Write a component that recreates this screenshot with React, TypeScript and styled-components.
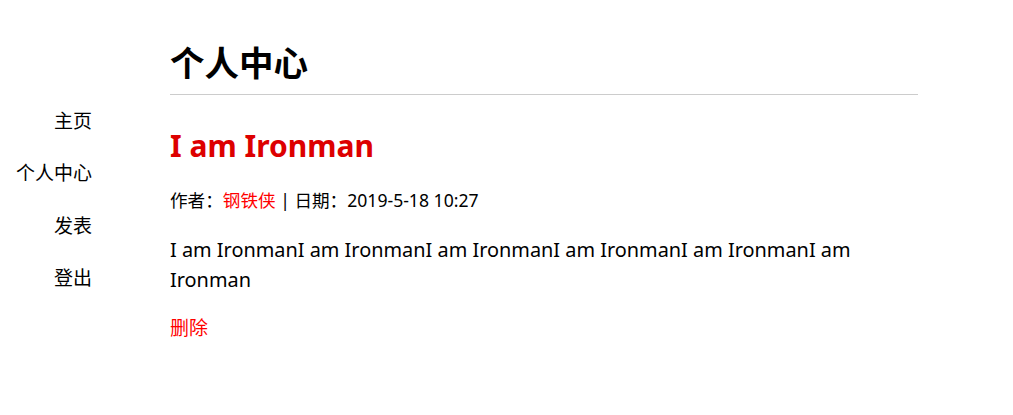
import React from "react";
import styled, { createGlobalStyle } from "styled-components";

const Global = createGlobalStyle`
  html, body { margin: 0; padding: 0; background: #fff; }
  body {
    font-family: "Noto Sans", "Noto Sans CJK SC", sans-serif;
    color: #000;
  }
`;

const Page = styled.div`
  display: flex;
  align-items: flex-start;
`;

const Sidebar = styled.nav`
  width: 92px;
  padding-top: 107px;
  display: flex;
  flex-direction: column;
  align-items: flex-end;
  gap: 24.3px;
`;

const NavItem = styled.a`
  font-size: 19px;
  line-height: 28px;
  color: #000;
  text-decoration: none;
  white-space: nowrap;
`;

const Main = styled.main`
  margin-left: 78px;
  width: 748px;
`;

const Heading = styled.h1`
  margin: 40px 0 0;
  padding-bottom: 8px;
  font-size: 34.5px;
  line-height: 46px;
  font-weight: 700;
  border-bottom: 1px solid #ccc;
`;

const Title = styled.h2`
  margin: 31px 0 0;
  font-size: 30px;
  line-height: 40px;
  font-weight: 700;
  color: #dd0000;
`;

const Meta = styled.div`
  margin-top: 21px;
  font-size: 17.6px;
  line-height: 26px;
`;

const Author = styled.span`
  color: red;
`;

const Body = styled.p`
  margin: 22px 0 0;
  font-size: 19.9px;
  line-height: 30px;
`;

const Delete = styled.a`
  display: inline-block;
  margin-top: 20px;
  font-size: 19px;
  line-height: 26px;
  color: red;
  text-decoration: none;
`;

export default function App() {
  return (
    <>
      <Global />
      <Page>
        <Sidebar>
          <NavItem href="#">主页</NavItem>
          <NavItem href="#">个人中心</NavItem>
          <NavItem href="#">发表</NavItem>
          <NavItem href="#">登出</NavItem>
        </Sidebar>
        <Main>
          <Heading>个人中心</Heading>
          <Title>I am Ironman</Title>
          <Meta>
            作者：<Author>钢铁侠</Author> | 日期：2019-5-18 10:27
          </Meta>
          <Body>
            I am IronmanI am IronmanI am IronmanI am IronmanI am IronmanI am Ironman
          </Body>
          <Delete href="#">删除</Delete>
        </Main>
      </Page>
    </>
  );
}
